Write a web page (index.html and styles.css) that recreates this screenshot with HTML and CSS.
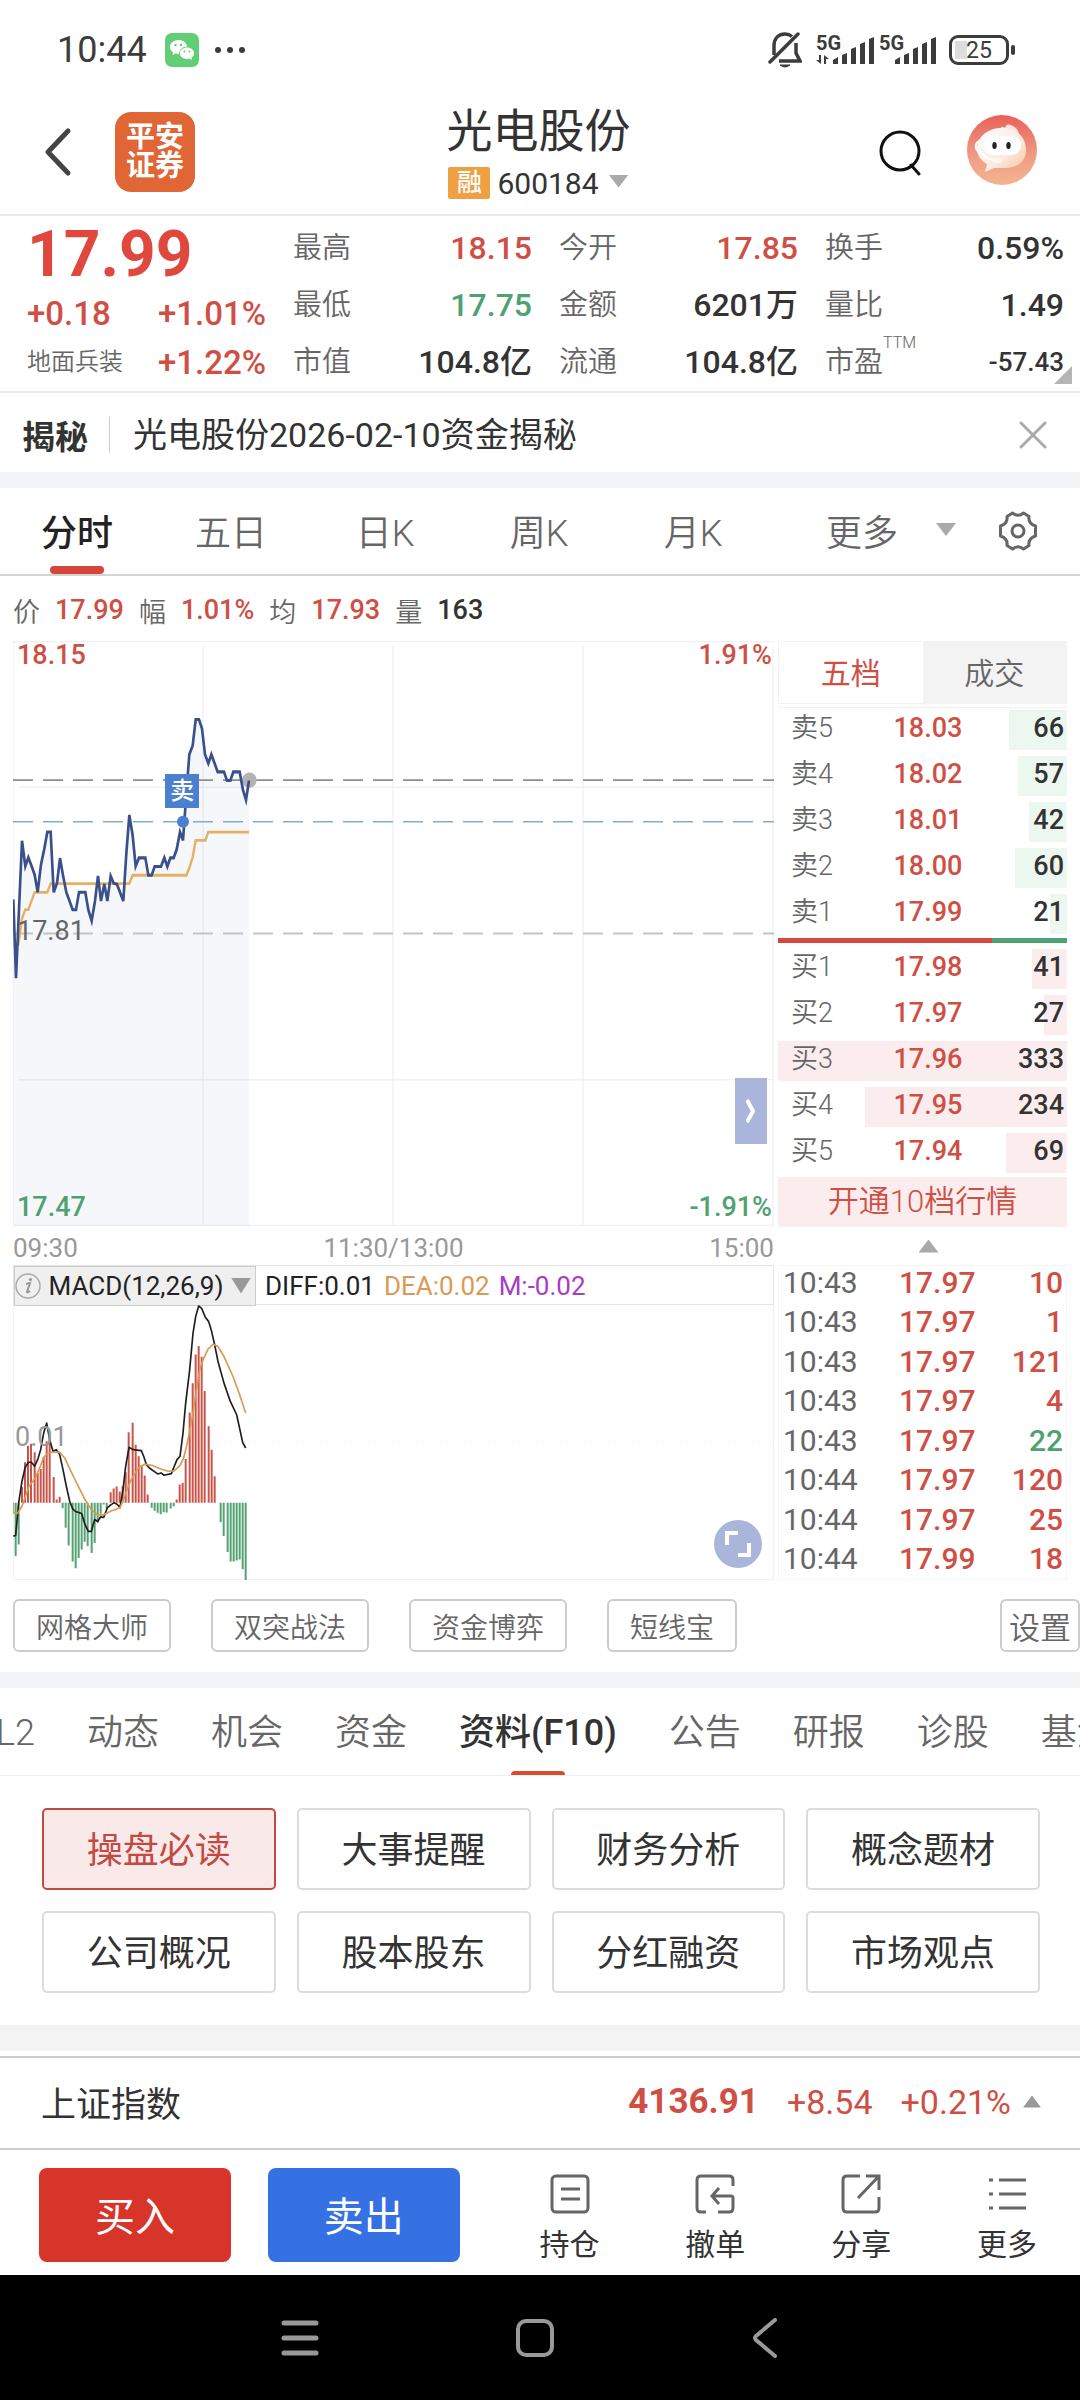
FILE: index.html
```html
<!DOCTYPE html>
<html lang="zh-CN">
<head>
<meta charset="utf-8">
<meta name="viewport" content="width=device-width, initial-scale=1">
<title>光电股份 600184</title>
<link rel="stylesheet" href="styles.css">
</head>
<body>
<div class="status">
  <span class="status-time">10:44</span>
  <svg class="status-wechat" width="34" height="34" viewBox="0 0 34 34" aria-hidden="true">
    <rect width="34" height="34" rx="7" fill="#62cf76"/>
    <path d="M13.500 7C8.800 7 5 10.100 5 14c0 2.200 1.200 4.100 3.100 5.400L7.400 22l3-1.500c1 .3 2 .5 3.100.5h.6c-.2-4.500 3.800-7.600 8.300-7.500C21.500 9.700 17.900 7 13.500 7z" fill="#fff"/>
    <path d="M22 14.500c-4 0-7.200 2.500-7.200 5.800S18 26 22 26c.9 0 1.700-.1 2.500-.4l2.500 1.300-.6-2.200c1.600-1 2.700-2.600 2.700-4.400 0-3.300-3.200-5.800-7.100-5.800z" fill="#fff"/>
    <g fill="#62cf76"><circle cx="10.500" cy="12" r="1.200"/><circle cx="16" cy="12" r="1.200"/><circle cx="19.500" cy="18.600" r="1"/><circle cx="24.500" cy="18.600" r="1"/></g>
  </svg>
  <svg class="status-dots" width="30" height="8" viewBox="0 0 30 8" aria-hidden="true"><g fill="#3c3c3c"><circle cx="3" cy="4" r="3"/><circle cx="15" cy="4" r="3"/><circle cx="27" cy="4" r="3"/></g></svg>
  <div class="status-right">
    <svg width="34" height="38" viewBox="0 0 34 38" fill="none" stroke="#3c3c3c" stroke-width="3.500" aria-hidden="true">
      <path d="M6 24V15C6 8 10 3 17 3c3 0 5 .8 7 2.500M28 12v10l4 8H11"/><path d="M2 31 30 3" stroke-linecap="round"/><path d="M12 34h10q-5 4-10 0z" fill="#3c3c3c" stroke-width="1"/>
    </svg>
    <div class="signal">
      <span class="signal-net">5G</span>
      <svg width="58" height="32" viewBox="0 0 58 32" fill="#3c3c3c" aria-hidden="true"><path d="M17 30v-4l5-3v7zM26 30V21l5-2v11zM35 30V15l5-2v17zM44 30V10l5-2v22zM53 30V5l5-2v27zM3 21h2v9l-5-4h3zM8 30v-9l5 4h-3v5z"/></svg>
    </div>
    <div class="signal">
      <span class="signal-net">5G</span>
      <svg width="58" height="32" viewBox="0 0 58 32" fill="#3c3c3c" aria-hidden="true"><path d="M16 30v-4l5-3v7zM25 30V21l5-2v11zM34 30V15l5-2v17zM43 30V10l5-2v22zM52 30V5l5-2v27z"/></svg>
    </div>
    <span class="battery"><span class="battery-body">25</span><span class="battery-tip"></span></span>
  </div>
</div>

<header class="header">
  <button class="icon-btn back" aria-label="返回"><svg width="28" height="50" viewBox="0 0 28 50" fill="none" stroke="#444" stroke-width="5" stroke-linecap="round" stroke-linejoin="round"><path d="M24 4 4 25 24 46"/></svg></button>
  <a class="logo" href="#home">平安<br>证券</a>
  <div class="title-box">
    <h1 class="title">光电股份</h1>
    <button class="code"><span class="badge">融</span>600184<span class="tri-down"></span></button>
  </div>
  <button class="icon-btn search" aria-label="搜索"><svg width="42" height="46" viewBox="0 0 42 46" fill="none" stroke="#111" stroke-width="3"><circle cx="21" cy="21" r="19"/><path d="m32 35 8 9" stroke-linecap="round"/></svg></button>
  <button class="icon-btn avatar" aria-label="客服"><svg width="70" height="70" viewBox="0 0 70 70">
    <defs>
      <linearGradient id="av" x1="0" y1="0" x2="0" y2="1"><stop offset="0" stop-color="#e9605a"/><stop offset=".6" stop-color="#f19c85"/><stop offset="1" stop-color="#f3b58f"/></linearGradient>
      <linearGradient id="face" x1="0" y1="0" x2="1" y2="1"><stop offset="0" stop-color="#fff"/><stop offset=".6" stop-color="#fce9e2"/><stop offset="1" stop-color="#f5c48f"/></linearGradient>
    </defs>
    <circle cx="35" cy="35" r="35" fill="url(#av)"/>
    <path d="M33 14q2-4 5-1 1-5 6-3 5 2 7 6l2 6H30z" fill="#fde4dc"/>
    <path d="M35 13c14 0 24 8 24 22 0 11-8 18-21 18H27l-9 4 2-8C13 45 10 40 10 33c1-12 11-20 25-20z" fill="url(#face)"/>
    <rect x="17" y="21" width="37" height="19" rx="9" fill="#fff"/>
    <ellipse cx="27.500" cy="30.500" rx="2.200" ry="3.600" fill="#222"/><ellipse cx="41.500" cy="30.500" rx="2.200" ry="3.600" fill="#222"/>
    <path d="M13 25c-6 4-5 9-1 12l10 7 10 2" fill="none" stroke="#fff" stroke-width="2"/><ellipse cx="31" cy="45.500" rx="4.500" ry="2.500" fill="#fff8e8"/>
  </svg></button>
</header>

<section class="quote">
  <div class="quote-main">
    <strong class="price">17.99</strong>
    <div class="pair up"><span>+0.18</span><span>+1.01%</span></div>
    <div class="pair up"><a class="sector" href="#sector">地面兵装</a><span>+1.22%</span></div>
  </div>
  <dl class="stats">
    <div><dt>最高</dt><dd class="up">18.15</dd></div>
    <div><dt>最低</dt><dd class="down">17.75</dd></div>
    <div><dt>市值</dt><dd>104.8亿</dd></div>
  </dl>
  <dl class="stats">
    <div><dt>今开</dt><dd class="up">17.85</dd></div>
    <div><dt>金额</dt><dd>6201万</dd></div>
    <div><dt>流通</dt><dd>104.8亿</dd></div>
  </dl>
  <dl class="stats">
    <div><dt>换手</dt><dd>0.59%</dd></div>
    <div><dt>量比</dt><dd>1.49</dd></div>
    <div><dt>市盈<span class="ttm">TTM</span></dt><dd class="small">-57.43</dd></div>
  </dl>
  <span class="corner"></span>
</section>

<section class="promo">
  <strong class="promo-tag">揭秘</strong>
  <a class="promo-link" href="#news">光电股份2026-02-10资金揭秘</a>
  <button class="icon-btn" aria-label="关闭"><svg width="28" height="28" viewBox="0 0 28 28" stroke="#aaa" stroke-width="3" stroke-linecap="round"><path d="m2 2 24 24M26 2 2 26"/></svg></button>
</section>

<nav class="periods">
  <button class="period active">分时</button>
  <button class="period">五日</button>
  <button class="period">日K</button>
  <button class="period">周K</button>
  <button class="period">月K</button>
  <button class="period more">更多<span class="tri-down"></span></button>
  <button class="icon-btn" aria-label="设置"><svg width="40" height="40" viewBox="0 0 40 40" fill="none" stroke="#666" stroke-width="3" stroke-linejoin="round"><path d="M14.500 2q5.500 4.500 11 0l5.500 3.500q-1 7 6.500 9.500v10q-7.500 2.500-6.500 9.500L25.500 38q-5.500-4.500-11 0L9 34.500q1-7-6.500-9.500v-10Q10 12.500 9 5.500z"/><circle cx="20" cy="20" r="6"/></svg></button>
</nav>

<p class="legend">
  <span>价</span><b class="up">17.99</b><span>幅</span><b class="up">1.01%</b><span>均</span><b class="up">17.93</b><span>量</span><b>163</b>
</p>

<main class="market">
  <div class="charts">
    <div class="trend">
      <svg class="plot" viewBox="40 54 2283 1476" preserveAspectRatio="none" role="img" aria-label="分时走势">
        <g fill="none">
          <path class="grid" d="M40 54V1530M610 68V1530M1180 68V1530M1750 68V1530M2320 68V1530M40 55H2323M57 423H2323M57 1161H2323M40 1529H2323"/>
          <path fill="#3c64b4" fill-opacity=".05" d="M41 706 49 905 67 558 77 622 86 600 105 644 114 688 124 618 143 536 153 536 162 688 172 665 181 602 200 688 219 732 229 732 238 688 257 688 266 732 276 760 295 647 304 710 314 667 323 710 333 647 342 665 352 668 371 710 380 590 389 493 399 545 408 622 418 601 437 601 446 645 456 645 465 623 484 623 494 601 503 623 512 601 522 601 531 580 541 536 550 557 569 340 579 318 588 252 598 252 607 275 616 340 626 363 635 340 654 384 673 384 682 406 692 406 701 384 720 384 730 430 739 455 748 406V1530H41z"/>
          <path class="dash" stroke="#8e8e8e" stroke-width="5" d="M40 405H2323"/>
          <path class="dash" stroke="#7fabd6" stroke-width="4" d="M40 510H2323"/>
          <path class="dash" stroke="#c4c4c4" stroke-width="5" d="M40 792H2323"/>
          <ellipse cx="749" cy="405" rx="22" ry="19" fill="#b3b3b3"/>
          <path stroke="#e6b062" stroke-width="7" d="M56 822 67 754 77 732 86 732 105 688 143 688 153 666 389 666 399 645 560 645 570 624 579 600 588 557 617 557 626 536 748 536"/>
          <path stroke="#3a508c" stroke-width="8" d="M41 706 49 905 67 558 77 622 86 600 95 620 105 644 114 688 124 618 134 578 143 536 153 536 162 688 172 665 181 602 191 650 200 688 219 732 229 732 238 688 257 688 266 732 276 760 286 710 295 647 304 710 314 667 323 710 333 647 342 665 352 668 371 710 380 590 389 493 399 545 408 622 418 601 437 601 446 645 456 645 465 623 484 623 494 601 503 623 512 601 522 601 531 580 541 536 550 557 560 440 569 340 579 318 588 252 598 252 607 275 616 340 626 363 635 340 654 384 673 384 682 406 692 406 701 384 720 384 730 430 739 455 748 406"/>
          <ellipse cx="550" cy="510" rx="18" ry="15" fill="#4a80cf"/>
        </g>
      </svg>
      <span class="mark">卖</span>
      <span class="lab lab-tl up">18.15</span>
      <span class="lab lab-tr up">1.91%</span>
      <span class="lab lab-mid">17.81</span>
      <span class="lab lab-bl down">17.47</span>
      <span class="lab lab-br down">-1.91%</span>
      <button class="expand" aria-label="展开"><svg width="10" height="24" viewBox="0 0 10 24" fill="none" stroke="#fff" stroke-width="4"><path d="m1 1 6 11-6 11"/></svg></button>
    </div>
    <div class="axis"><span>09:30</span><span>11:30/13:00</span><span>15:00</span></div>
    <div class="macd-head">
      <button class="macd-pick"><svg width="26" height="26" viewBox="0 0 26 26" aria-hidden="true"><circle cx="13" cy="13" r="12" fill="none" stroke="#aaa" stroke-width="1.500"/><path d="m11 11 4-1-3 9q0 1 3-1" fill="none" stroke="#999" stroke-width="2"/><circle cx="15.500" cy="6.500" r="1.600" fill="#999"/></svg><span>MACD(12,26,9)</span><span class="tri-down dark"></span></button>
      <span>DIFF:0.01</span><span class="dea">DEA:0.02</span><span class="mval">M:-0.02</span>
    </div>
    <div class="macd">
      <span class="lab lab-macd">0.01</span>
      <svg class="plot" viewBox="40 225 2283 827" preserveAspectRatio="none" role="img" aria-label="MACD">
        <g fill="none">
          <path stroke="#eee" stroke-width="3" stroke-dasharray="4 14" d="M190 638H2323"/>
          <path stroke="#f2f2f2" stroke-width="4" d="M41 225V1051H2321V225"/>
          <path stroke="#c9544a" stroke-width="6" d="M67 820V772M76 820V698M85 820V648M94 820V642M105 820V668M114 820V730M123 820V718M132 820V683M141 820V635M150 820V617M162 820V742M171 820V810M180 820V802M333 820V788M342 820V777M351 820V771M360 820V786M369 820V770M378 820V728M387 820V608M399 820V579M408 820V645M417 820V680M426 820V707M435 820V738M444 820V795M531 820V810M540 820V765M549 820V760M558 820V688M570 820V548M579 820V460M588 820V374M597 820V348M606 820V381M615 820V484M627 820V590M636 820V660M645 820V740"/>
          <path stroke="#55a173" stroke-width="6" d="M48 820V980M57 820V945M189 820V836M198 820V895M207 820V948M219 820V996M228 820V1017M237 820V986M246 820V960M255 820V937M264 820V950M276 820V971M285 820V941M294 820V880M303 820V853M312 820V825M321 820V838M456 820V835M465 820V844M474 820V850M483 820V854M492 820V848M501 820V849M513 820V837M522 820V830M663 820V878M672 820V920M684 820V968M693 820V996M702 820V996M711 820V993M720 820V990M729 820V1020M738 820V1052"/>
          <path stroke="#1f1f1f" stroke-width="5" stroke-linejoin="round" d="M41 920 48 918 57 820 67 755 76 715 86 698 95 698 105 710 114 690 123 660 132 610 141 580 150 630 160 665 170 660 180 675 190 720 200 770 210 815 219 838 228 846 246 852 256 885 266 906 275 906 285 870 294 876 303 862 312 864 323 835 333 826 343 820 352 824 361 834 370 780 378 710 388 653 400 660 425 663 432 680 440 705 450 716 474 733 484 730 493 737 515 732 523 712 532 690 541 680 550 610 558 520 570 420 580 310 588 260 597 228 606 235 617 262 627 275 636 305 645 345 655 395 673 460 692 515 711 555 729 638 738 655"/>
          <path stroke="#da9a55" stroke-width="5" stroke-linejoin="round" d="M41 820V850L53 852 67 830 88 770 107 745 120 715 132 683 143 672 160 667 180 668 195 685 228 755 256 810 275 840 294 856 312 856 333 845 361 835 375 800 388 765 400 740 418 713 435 704 456 707 484 718 505 725 523 724 541 708 552 685 562 645 571 600 580 550 590 480 600 420 610 390 625 358 640 343 655 350 673 380 700 440 720 495 738 550"/>
        </g>
      </svg>
      <button class="full" aria-label="全屏"><svg width="28" height="28" viewBox="0 0 28 28" fill="none" stroke="#fff" stroke-width="4"><path d="M3 15V3h11M14 25h11V13"/></svg></button>
    </div>
  </div>

  <div class="side">
    <div class="book-tabs"><button class="book-tab active">五档</button><button class="book-tab">成交</button></div>
    <table class="book">
      <tbody class="sell">
        <tr style="background-size:20% 100%"><th scope="row">卖5</th><td class="up">18.03</td><td>66</td></tr>
        <tr style="background-size:17% 100%"><th scope="row">卖4</th><td class="up">18.02</td><td>57</td></tr>
        <tr style="background-size:13% 100%"><th scope="row">卖3</th><td class="up">18.01</td><td>42</td></tr>
        <tr style="background-size:18% 100%"><th scope="row">卖2</th><td class="up">18.00</td><td>60</td></tr>
        <tr style="background-size:6% 100%"><th scope="row">卖1</th><td class="up">17.99</td><td>21</td></tr>
      </tbody>
      <tbody class="buy">
        <tr style="background-size:12% 100%"><th scope="row">买1</th><td class="up">17.98</td><td>41</td></tr>
        <tr style="background-size:8% 100%"><th scope="row">买2</th><td class="up">17.97</td><td>27</td></tr>
        <tr style="background-size:100% 100%"><th scope="row">买3</th><td class="up">17.96</td><td>333</td></tr>
        <tr style="background-size:70% 100%"><th scope="row">买4</th><td class="up">17.95</td><td>234</td></tr>
        <tr style="background-size:21% 100%"><th scope="row">买5</th><td class="up">17.94</td><td>69</td></tr>
      </tbody>
    </table>
    <button class="open10">开通10档行情</button>
    <button class="fold" aria-label="收起"><span class="tri-up"></span></button>
    <table class="ticks">
      <tbody>
        <tr><td>10:43</td><td class="up">17.97</td><td class="up">10</td></tr>
        <tr><td>10:43</td><td class="up">17.97</td><td class="up">1</td></tr>
        <tr><td>10:43</td><td class="up">17.97</td><td class="up">121</td></tr>
        <tr><td>10:43</td><td class="up">17.97</td><td class="up">4</td></tr>
        <tr><td>10:43</td><td class="up">17.97</td><td class="down">22</td></tr>
        <tr><td>10:44</td><td class="up">17.97</td><td class="up">120</td></tr>
        <tr><td>10:44</td><td class="up">17.97</td><td class="up">25</td></tr>
        <tr><td>10:44</td><td class="up">17.99</td><td class="up">18</td></tr>
      </tbody>
    </table>
  </div>
</main>

<div class="tools">
  <button class="tool">网格大师</button>
  <button class="tool">双突战法</button>
  <button class="tool">资金博弈</button>
  <button class="tool">短线宝</button>
  <button class="tool set">设置</button>
</div>

<nav class="info-tabs">
  <a href="#l2">L2</a><a href="#news">动态</a><a href="#chance">机会</a><a href="#fund">资金</a><a class="active" href="#f10">资料(F10)</a><a href="#notice">公告</a><a href="#report">研报</a><a href="#diagnose">诊股</a><a href="#base">基金</a>
</nav>

<section class="topics">
  <button class="topic active">操盘必读</button>
  <button class="topic">大事提醒</button>
  <button class="topic">财务分析</button>
  <button class="topic">概念题材</button>
  <button class="topic">公司概况</button>
  <button class="topic">股本股东</button>
  <button class="topic">分红融资</button>
  <button class="topic">市场观点</button>
</section>

<section class="index">
  <span class="index-name">上证指数</span>
  <b class="up index-val">4136.91</b><span class="up">+8.54</span><span class="up">+0.21%</span>
  <span class="tri-up"></span>
</section>

<footer class="actions">
  <button class="trade buy-btn">买入</button>
  <button class="trade sell-btn">卖出</button>
  <div class="links">
    <a href="#position"><svg width="40" height="40" viewBox="0 0 40 40"><rect x="2" y="2" width="36" height="36" rx="4"/><path d="M11 15h19M11 25h19"/></svg>持仓</a>
    <a href="#cancel"><svg width="40" height="40" viewBox="0 0 40 40"><path d="M11 38H6q-4 0-4-4V6q0-4 4-4h28q4 0 4 4v6M23 38h11q4 0 4-4V24q0-2-2-2H19M24 14l-7 8 7 8"/></svg>撤单</a>
    <a href="#share"><svg width="40" height="40" viewBox="0 0 40 40"><path d="M19 2H6Q2 2 2 6v28q0 4 4 4h28q4 0 4-4V23M25 2h13v14M38 2 17 24"/></svg>分享</a>
    <a href="#more"><svg width="40" height="40" viewBox="0 0 40 40"><path d="M12 6h27M12 20h27M12 34h27M2 6h4M2 20h4M2 34h4"/></svg>更多</a>
  </div>
</footer>

<nav class="sysnav">
  <button class="icon-btn" aria-label="最近任务"><svg width="38" height="40" viewBox="0 0 38 40" stroke="#999" stroke-width="5" stroke-linecap="round"><path d="M3 5h32M3 20h32M3 35h32"/></svg></button>
  <button class="icon-btn" aria-label="主屏幕"><svg width="40" height="40" viewBox="0 0 40 40" fill="none" stroke="#999" stroke-width="4"><rect x="3" y="3" width="34" height="34" rx="8"/></svg></button>
  <button class="icon-btn" aria-label="返回"><svg width="26" height="40" viewBox="0 0 26 40" fill="none" stroke="#999" stroke-width="4" stroke-linecap="round" stroke-linejoin="round"><path d="M23 2 4 18q-2 2 0 4l19 16"/></svg></button>
</nav>
</body>
</html>
```
FILE: styles.css
```css
* { box-sizing: border-box; }
body {
  margin: 0;
  background: #fff;
  color: #333;
  font-family: Roboto, "Noto Sans CJK SC", sans-serif;
  font-size: 28px;
}
button {
  margin: 0;
  padding: 0;
  border: 0;
  background: none;
  color: inherit;
  font: inherit;
  cursor: pointer;
}
a { color: inherit; text-decoration: none; }
svg { display: block; flex: none; }
h1, p, dl, dd { margin: 0; }
table { border-collapse: collapse; }
td, th { padding: 0; }

.up { color: #cf4f45; }
.down { color: #4fa171; }
.icon-btn { display: grid; place-items: center; }
.tri-down, .tri-up {
  display: inline-block;
  flex: none;
  width: 20px;
  height: 13px;
  background: #aaa;
  clip-path: polygon(0 0, 100% 0, 50% 100%);
}
.tri-up { clip-path: polygon(50% 0, 100% 100%, 0 100%); }
.tri-down.dark { height: 16px; background: #999; }

/* Status bar */
.status {
  display: flex;
  align-items: center;
  height: 100px;
  padding: 0 65px 0 57px;
  color: #3c3c3c;
}
.status-time { font-size: 36px; }
.status-wechat { margin-left: 18px; }
.status-dots { margin-left: 16px; }
.status-right { display: flex; align-items: center; gap: 5px; margin-left: auto; }
.signal { display: grid; }
.status-right > svg { margin-right: 9px; }
.signal > * { grid-area: 1 / 1; }
.signal-net { font-size: 20px; font-weight: 700; line-height: 18px; }
.battery { display: flex; align-items: center; gap: 2px; margin-left: 7px; }
.battery-body {
  width: 60px;
  height: 30px;
  border: 3px solid #3c3c3c;
  border-radius: 9px;
  background: linear-gradient(#ddd, #ddd) 3px 3px / 12px 18px no-repeat;
  font-size: 23px;
  line-height: 25px;
  text-align: center;
}
.battery-tip { width: 4px; height: 10px; border-radius: 2px; background: #3c3c3c; }

/* Header */
.header {
  display: grid;
  grid-template-columns: 28px 80px 1fr 42px 70px;
  align-items: center;
  height: 116px;
  padding: 0 43px 10px 44px;
  border-bottom: 2px solid #ebebeb;
}
.logo {
  display: grid;
  place-content: center;
  width: 80px;
  height: 80px;
  margin-left: 43px;
  border-radius: 16px;
  background: #e06636;
  color: #fff;
  font-size: 29px;
  font-weight: 700;
  line-height: 29px;
}
.title-box {
  display: grid;
  justify-items: center;
  gap: 8px;
  padding-top: 6px;
}
.title { font-size: 46px; font-weight: 400; line-height: 46px; }
.code { display: flex; align-items: center; gap: 7px; height: 40px; padding-top: 2px; font-size: 30px; }
.code .tri-down { margin: 0 0 4px 3px; }
.badge {
  width: 42px;
  height: 32px;
  border-radius: 2px;
  background: #eea043;
  color: #fff;
  font-size: 25px;
  font-weight: 500;
  line-height: 32px;
  text-align: center;
}
.search { margin: 2px 46px 0 0; justify-self: end; }
.avatar { margin-bottom: 4px; }

/* Quote summary */
.quote {
  position: relative;
  display: grid;
  grid-template-columns: repeat(4, 1fr);
  gap: 27px;
  height: 177px;
  padding: 4px 16px 0 27px;
  border-bottom: 2px solid #ebebeb;
}
.quote-main { display: flex; flex-direction: column; }
.price { color: #e0483e; font-size: 64px; line-height: 69px; }
.pair {
  display: flex;
  justify-content: space-between;
  font-size: 33px;
  font-weight: 500;
  line-height: 49px;
}
.sector { color: #666; font-size: 24px; font-weight: 350; }
.stats > div {
  display: flex;
  justify-content: space-between;
  line-height: 57px;
}
.stats dt { color: #666; font-size: 29px; font-weight: 350; }
.stats dd { font-size: 32px; font-weight: 500; }
.stats dd.small { font-size: 26px; }
.ttm { font-size: 16px; vertical-align: 24px; line-height: 16px; }
.corner {
  position: absolute;
  right: 8px;
  bottom: 7px;
  width: 18px;
  height: 18px;
  background: #b5b5b5;
  clip-path: polygon(100% 0, 100% 100%, 0 100%);
}

/* Promo line */
.promo {
  display: flex;
  align-items: center;
  height: 95px;
  padding: 4px 33px 0 22px;
  border-bottom: 16px solid #f2f4f8;
  font-size: 34px;
}
.promo-tag { font-size: 33px; }
.promo-link {
  flex: 1;
  margin-left: 21px;
  padding-left: 23px;
  border-left: 1px solid #ccc;
  line-height: 36px;
}

/* Period tabs */
.periods {
  display: grid;
  grid-template-columns: repeat(5, 154fr) 186fr 124fr;
  align-items: center;
  height: 88px;
  border-bottom: 2px solid #d4d4d4;
  color: #666;
  font-size: 36px;
  font-weight: 350;
}
.period { position: relative; height: 86px; padding-bottom: 3px; }
.period.active { color: #222; font-weight: 500; }
.period.active::after, .info-tabs .active::after {
  content: "";
  position: absolute;
  left: 50%;
  bottom: 0;
  width: 54px;
  height: 8px;
  margin-left: -27px;
  border-radius: 4px;
  background: #d6453b;
}
.more { display: flex; align-items: center; justify-content: flex-end; gap: 38px; }

.legend {
  display: flex;
  align-items: center;
  gap: 15px;
  height: 65px;
  padding: 3px 13px 0;
  font-size: 27px;
}
.legend span { color: #666; font-weight: 350; }
.legend b { font-weight: 500; }

/* Charts and order book */
.market {
  display: grid;
  grid-template-columns: 761fr 289fr;
  gap: 4px;
  padding: 0 13px;
}
.trend, .macd { position: relative; }
.plot { width: 100%; height: 100%; }
.trend { height: 585px; }
.grid { stroke: #f0f1f4; stroke-width: 4; }
.dash { stroke-dasharray: 60 30; }
.lab { position: absolute; font-size: 27px; line-height: 26px; font-weight: 500; }
.lab-tl { left: 4px; top: 1px; }
.lab-tr { right: 2px; top: 1px; }
.lab-mid { left: 4px; top: 277px; color: #666; font-weight: 400; }
.lab-bl { left: 4px; bottom: 6px; }
.lab-br { right: 2px; bottom: 6px; }
.lab-macd { left: 2px; top: 119px; color: #999; font-weight: 400; }
.mark {
  position: absolute;
  left: 20%;
  top: 133px;
  width: 34px;
  height: 34px;
  background: #4a80cf;
  color: #fff;
  font-size: 24px;
  font-weight: 500;
  line-height: 34px;
  text-align: center;
}
.expand {
  position: absolute;
  right: 7px;
  top: 437px;
  display: grid;
  place-items: center;
  width: 32px;
  height: 66px;
  background: #a9b5db;
}
.axis {
  display: flex;
  justify-content: space-between;
  height: 39px;
  color: #999;
  font-size: 26px;
  line-height: 44px;
}
.macd-head {
  display: flex;
  align-items: center;
  gap: 9px;
  height: 40px;
  padding-top: 1px;
  border: 1px solid #e4e4e4;
  color: #222;
  font-size: 26px;
}
.macd-pick {
  display: flex;
  align-items: center;
  justify-content: space-between;
  width: 242px;
  height: 40px;
  padding-right: 4px;
  border: 1px solid #ccc;
  background: #efefef;
}
.dea { color: #da9a55; }
.mval { color: #a93bc4; }
.macd { height: 275px; }
.full {
  position: absolute;
  right: 12px;
  bottom: 12px;
  display: grid;
  place-items: center;
  width: 48px;
  height: 48px;
  border-radius: 50%;
  background: #a9b5db;
}
.side { display: flex; flex-direction: column; }
.book-tabs {
  display: grid;
  grid-template-columns: 1fr 1fr;
  height: 63px;
  border: 1px solid #f3f3f3;
  font-size: 30px;
}
.book-tab { padding-bottom: 3px; background: #f3f3f3; color: #666; font-weight: 350; }
.book-tab.active { background: #fff; color: #cf4f45; font-weight: 400; }
.book { display: block; margin-top: 3px; border-top: 1px solid #f3f3f3; font-size: 27px; }
.book tbody { display: grid; gap: 6px; padding: 2px 0 4px; }
.book tr {
  display: grid;
  grid-template-columns: 1fr 68px 1fr;
  height: 40px;
  padding: 0 3px 0 13px;
  background: linear-gradient(#ebf7ef, #ebf7ef) right / 0 100% no-repeat;
  line-height: 37px;
}
.book .buy tr { background-image: linear-gradient(#fbeded, #fbeded); }
.book .buy {
  padding-top: 11px;
  background: linear-gradient(90deg, #d6483f 74%, #4fa171 74%) top / 100% 5px no-repeat;
}
.book th { color: #666; font-weight: 350; text-align: left; }
.book td { font-weight: 500; }
.book td:last-child, .ticks td:last-child { text-align: right; }
.open10 {
  height: 50px;
  background: #fbeded;
  color: #cf4f45;
  font-size: 31px;
  font-weight: 350;
  line-height: 50px;
}
.fold { display: grid; place-items: center; height: 38px; padding-left: 12px; }
.ticks {
  display: block;
  border: 1px solid #f6f6f6;
  font-size: 30px;
  font-weight: 500;
}
.ticks tbody {
  display: flex;
  flex-direction: column;
  justify-content: space-between;
  height: 313px;
  padding: 1px 0 4px;
}
.ticks tr {
  display: grid;
  grid-template-columns: 116px 76px 1fr;
  padding: 0 3px 0 4px;
  line-height: 32px;
}
.ticks td:first-child { color: #666; font-weight: 400; }

/* Tool buttons */
.tools {
  display: flex;
  gap: 40px;
  height: 108px;
  padding: 19px 0 20px 13px;
  border-bottom: 16px solid #f2f4f8;
  color: #666;
}
.tool {
  height: 53px;
  padding: 0 21px;
  border: 2px solid #ccc;
  border-radius: 6px;
  font-weight: 350;
}
.tool.set { margin-left: auto; padding: 0 7px; font-size: 31px; }

/* Detail tabs */
.info-tabs {
  display: flex;
  gap: 52px;
  height: 88px;
  overflow: hidden;
  border-bottom: 1px solid #eee;
  color: #666;
  font-size: 36px;
  font-weight: 350;
  line-height: 90px;
  white-space: nowrap;
}
.info-tabs a:first-child { margin-left: -4px; }
.info-tabs a { position: relative; height: 88px; }
.info-tabs .active { color: #333; font-weight: 500; }
.info-tabs .active::after {
  height: 5px;
  border-radius: 4px 4px 0 0;
  background: #d94c30;
}
.topics {
  display: grid;
  grid-template-columns: repeat(4, 1fr);
  gap: 21px;
  padding: 32px 40px 32px 42px;
}
.topic {
  height: 82px;
  padding-bottom: 5px;
  border: 2px solid #dcdcdc;
  border-radius: 5px;
  font-size: 36px;
}
.topic.active { border-color: #c24a42; background: #fae9e9; color: #c24a42; }

/* Index strip */
.index {
  display: flex;
  align-items: center;
  gap: 28px;
  height: 125px;
  padding: 4px 39px 0 41px;
  border-top: 26px solid #f3f3f3;
  border-bottom: 2px solid #ccc;
  background: linear-gradient(#ccc, #ccc) 0 5px / 100% 2px no-repeat;
  font-size: 34px;
}
.index-name { flex: 1; font-size: 35px; }
.index-val { font-size: 35px; }
.index .tri-up { width: 18px; height: 12px; margin-left: -16px; background: #999; }

/* Action bar */
.actions {
  display: grid;
  grid-template-columns: 192fr 192fr 584fr;
  gap: 37px;
  height: 125px;
  padding: 18px 0 18px 39px;
}
.trade { padding-bottom: 3px; border-radius: 8px; color: #fff; font-size: 40px; }
.buy-btn { background: #d73529; }
.sell-btn { background: #3571e2; }
.links { display: grid; grid-template-columns: repeat(4, 1fr); }
.links a {
  display: flex;
  flex-direction: column;
  align-items: center;
  gap: 14px;
  padding-top: 6px;
  font-size: 30px;
  line-height: 34px;
}
.links svg { fill: none; stroke: #666; stroke-width: 3; }

.sysnav {
  display: flex;
  justify-content: space-between;
  align-items: center;
  height: 125px;
  padding: 0 28% 0 26%;
  background: #000;
}
```
